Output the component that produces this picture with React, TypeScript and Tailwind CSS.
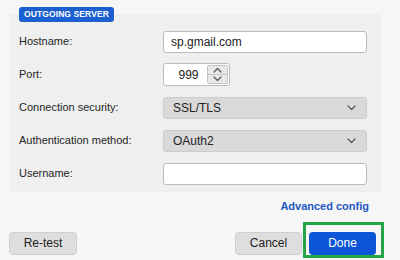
import React from "react";

const Chevron = ({ up = false }: { up?: boolean }) => (
    <svg width="9" height="6" viewBox="0 0 9 6" fill="none" className="block">
        <path
            d={up ? "M1 5 L4.5 1.5 L8 5" : "M1 1 L4.5 4.5 L8 1"}
            stroke="#555"
            strokeWidth="1.2"
            strokeLinecap="round"
            strokeLinejoin="round"
        />
    </svg>
);

const Row = ({ label, children }: { label: string; children: React.ReactNode }) => (
    <div className="flex items-center h-[23px]">
        <div className="w-[144px] text-[11px] text-[#262626]">{label}</div>
        {children}
    </div>
);

const Select = ({ value }: { value: string }) => (
    <div className="w-[204px] h-[22px] flex items-center justify-between pl-[9px] pr-[10px] bg-[#d9d9d9] border border-[#cdcdcd] rounded-[3px] text-[12px] text-[#222]">
        <span>{value}</span>
        <Chevron />
    </div>
);

export default function App() {
    return (
        <div className="w-[400px] h-[260px] bg-[#f6f6f6] pt-[14px] pl-[10px] relative" style={{ fontFamily: '"Liberation Sans", Arial, sans-serif' }}>
            <section className="relative w-[371px] h-[178px] bg-[#efefef] rounded-[3px] pt-[16px] pl-[9px]">
                <div className="absolute -top-[7px] left-[9px] h-[15px] px-[5px] flex items-center bg-[#1b5fd0] rounded-[3px] text-white text-[8.5px] font-bold tracking-[0.1px]">
                    OUTGOING SERVER
                </div>
                <div className="flex flex-col gap-[10px]">
                    <Row label="Hostname:">
                        <div className="w-[204px] h-[22px] flex items-center px-[7px] bg-white border border-[#bcbcbc] rounded-[3px] text-[12px] text-[#222]">
                            sp.gmail.com
                        </div>
                    </Row>
                    <Row label="Port:">
                        <div className="w-[67px] h-[23px] flex bg-white border border-[#bcbcbc] rounded-[3px] overflow-hidden">
                            <div className="w-[43px] flex items-center justify-center pl-[6px] text-[12px] text-[#222]">999</div>
                            <div className="flex-1 flex flex-col my-[1px] mr-[1px] border border-[#c4c4c4] rounded-[2px] bg-[#e8e8e8]">
                                <div className="flex-1 flex items-center justify-center border-b border-[#c4c4c4]">
                                    <Chevron up />
                                </div>
                                <div className="flex-1 flex items-center justify-center">
                                    <Chevron />
                                </div>
                            </div>
                        </div>
                    </Row>
                    <Row label="Connection security:">
                        <Select value="SSL/TLS" />
                    </Row>
                    <Row label="Authentication method:">
                        <Select value="OAuth2" />
                    </Row>
                    <Row label="Username:">
                        <div className="w-[204px] h-[22px] bg-white border border-[#bcbcbc] rounded-[3px]" />
                    </Row>
                </div>
            </section>

            <div className="w-[359px] flex justify-end mt-[6px] text-[11px] font-bold text-[#1f57c3]">
                Advanced config
            </div>

            <div className="flex items-center mt-[17px] -ml-[1px] w-[367px]">
                <button className="w-[68px] h-[23px] bg-[#dedede] border border-[#cfcfcf] rounded-[4px] text-[12px] text-[#222]">
                    Re-test
                </button>
                <div className="flex-1" />
                <button className="w-[67px] h-[23px] bg-[#dedede] border border-[#cfcfcf] rounded-[4px] text-[12px] text-[#222]">
                    Cancel
                </button>
                <button className="ml-[7px] w-[67px] h-[23px] bg-[#0b55d6] rounded-[4px] text-[12px] text-white">
                    Done
                </button>
            </div>

            <div className="absolute left-[303px] top-[222px] w-[81px] h-[36px] border-[3px] border-[#22a447] pointer-events-none" />
        </div>
    );
}
